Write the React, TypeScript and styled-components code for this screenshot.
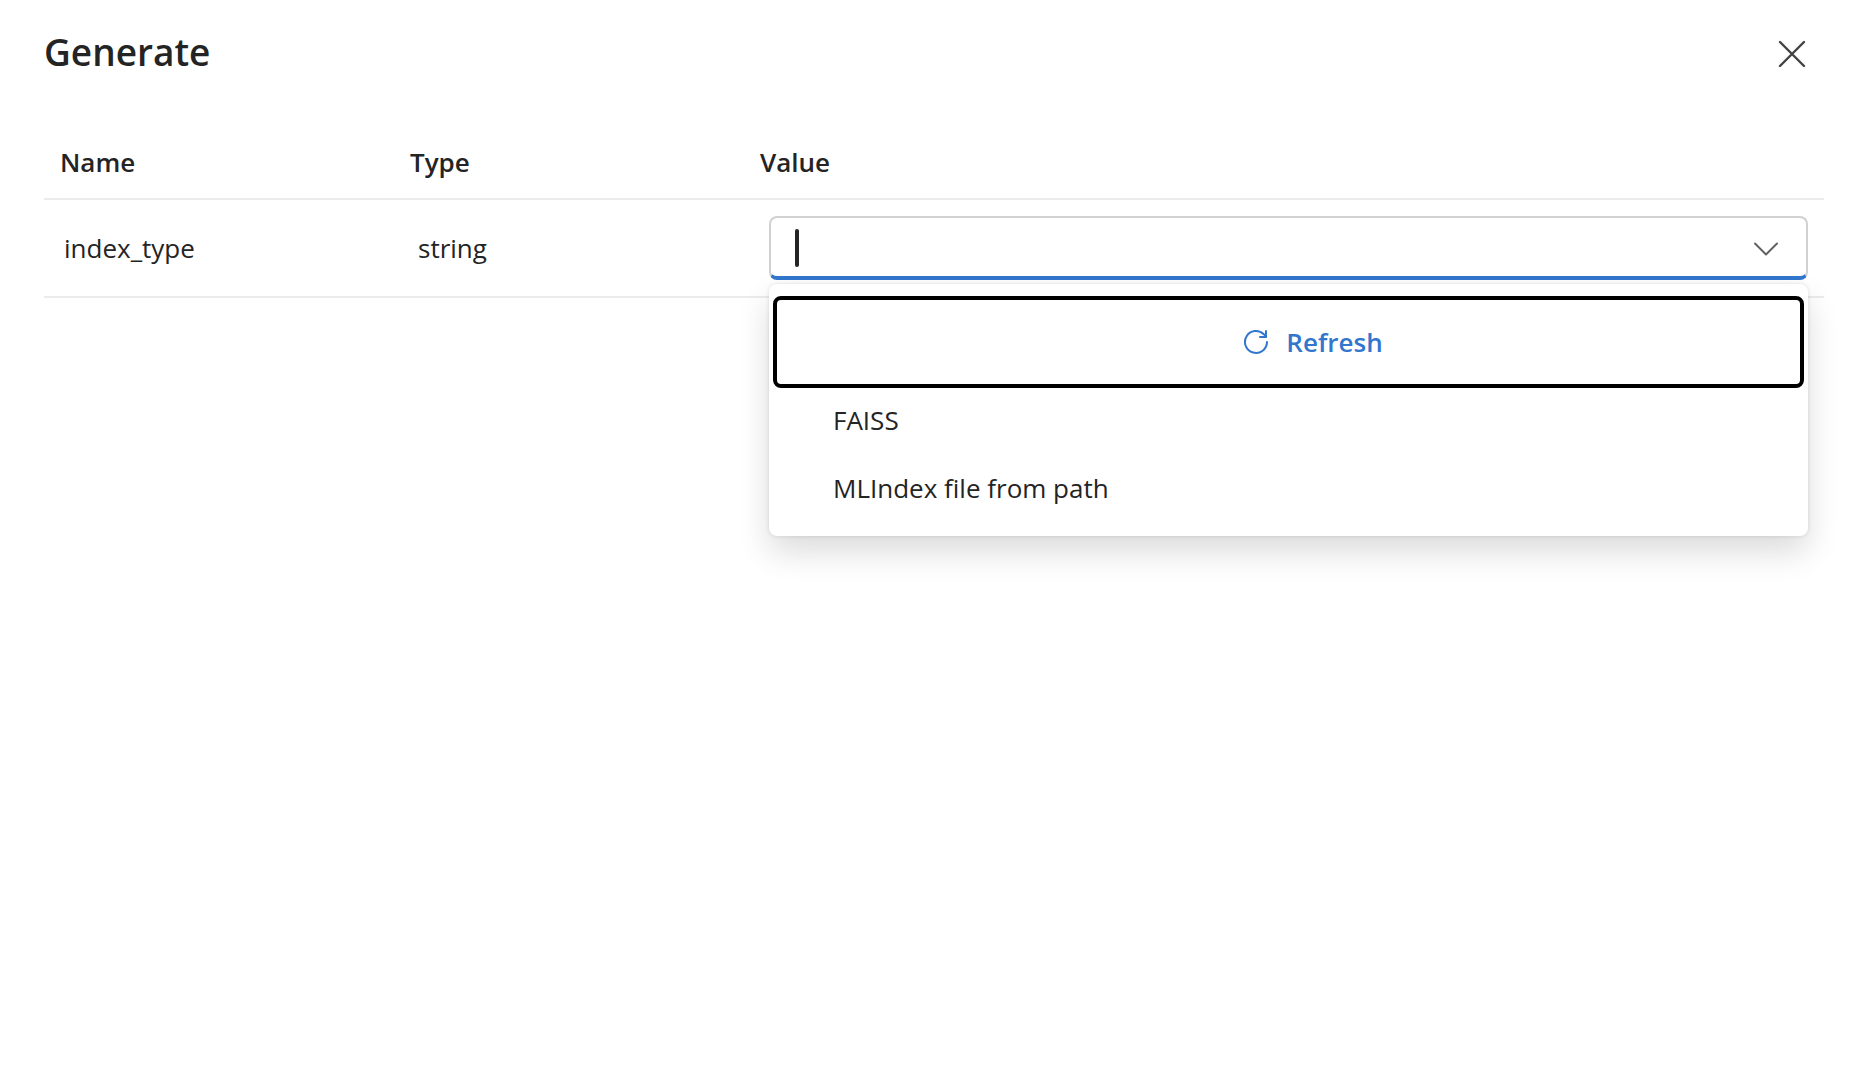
import React, { useState } from "react";
import styled, { createGlobalStyle } from "styled-components";

const ink = "#242424";
const brand = "#3276cd";

const GlobalStyle = createGlobalStyle`
  *, *::before, *::after { box-sizing: border-box; }
  body {
    margin: 0;
    background: #fff;
    color: ${ink};
    font-family: "Segoe UI", "Open Sans", "Noto Sans", sans-serif;
    font-size: 26px;
    line-height: 40px;
  }
  button, input { font: inherit; color: inherit; }
`;

const Panel = styled.main`
  min-height: 100vh;
  padding: 26px 26px 24px 44px;
`;

const PanelHeader = styled.header`
  display: flex;
  align-items: center;
  justify-content: space-between;
  margin-bottom: 48px;
`;

const Title = styled.h1`
  margin: 0;
  font-size: 37px;
  line-height: 52px;
  font-weight: 600;
`;

const IconButton = styled.button`
  display: grid;
  place-items: center;
  width: 64px;
  height: 52px;
  padding: 4px 0 0;
  border: 0;
  background: transparent;
  color: #424242;
  cursor: pointer;
`;

const Table = styled.table`
  width: 100%;
  table-layout: fixed;
  border-collapse: separate;
  border-spacing: 0;
`;

const Column = styled.col<{ $width?: string }>`
  width: ${({ $width }) => $width ?? "auto"};
`;

const HeadCell = styled.th`
  padding: 16px;
  border-bottom: 2px solid #ebebeb;
  font-weight: 600;
  text-align: left;
`;

const Cell = styled.td<{ $indent: number }>`
  padding: 16px 16px 16px ${({ $indent }) => $indent}px;
  border-bottom: 2px solid #ebebeb;
`;

const Combobox = styled.div`
  position: relative;
`;

const Field = styled.div`
  position: relative;
  display: flex;
  height: 64px;
  overflow: hidden;
  border: 2px solid #d1d1d1;
  border-radius: 8px;
  border-bottom: 4px solid ${brand};
`;

const Input = styled.input`
  flex: 1;
  min-width: 0;
  padding: 0 24px;
  border: 0;
  outline: 0;
  background: transparent;
  caret-color: transparent;
`;

const Caret = styled.span`
  position: absolute;
  top: 11px;
  left: 24px;
  width: 4px;
  height: 38px;
  border-radius: 2px;
  background: ${ink};
`;

const ToggleButton = styled(IconButton)`
  width: 80px;
  height: auto;
  color: #616161;
`;

const Popup = styled.div`
  position: absolute;
  top: calc(100% + 4px);
  left: 0;
  right: 0;
  z-index: 1;
  padding: 12px 4px 16px;
  border-radius: 8px;
  background: #fff;
  box-shadow: 0 0 4px rgba(0, 0, 0, 0.12), 0 16px 32px rgba(0, 0, 0, 0.14);
`;

const RefreshButton = styled.button`
  display: flex;
  align-items: center;
  justify-content: center;
  gap: 16px;
  width: 100%;
  height: 92px;
  padding: 0 0 0 48px;
  border: 4px solid #000;
  border-radius: 8px;
  background: transparent;
  color: ${brand};
  font-weight: 600;
  cursor: pointer;
`;

const OptionList = styled.ul`
  display: grid;
  gap: 4px;
  margin: 0;
  padding: 0;
  list-style: none;
`;

const Option = styled.li`
  padding: 12px 16px 12px 60px;
  cursor: pointer;
`;

const CloseIcon = () => (
  <svg width="28" height="28" viewBox="0 0 28 28" fill="none" stroke="currentColor" strokeWidth="2.4" strokeLinecap="round" aria-hidden="true">
    <path d="M2 2 26 26M26 2 2 26" />
  </svg>
);

const ChevronIcon = () => (
  <svg width="28" height="16" viewBox="0 0 28 16" fill="none" stroke="currentColor" strokeWidth="2" strokeLinecap="round" strokeLinejoin="round" aria-hidden="true">
    <path d="M3 2.5 14 13.5 25 2.5" />
  </svg>
);

const RefreshIcon = () => (
  <svg width="28" height="28" viewBox="0 0 28 28" fill="none" stroke="currentColor" strokeWidth="2" strokeLinecap="round" strokeLinejoin="round" aria-hidden="true">
    <path d="M25 14A11 11 0 1 1 21.8 6.2L24 8.8" />
    <path d="M24 3V9H18" />
  </svg>
);

const options = ["FAISS", "MLIndex file from path"];

export default function App() {
  const [value, setValue] = useState("");
  const [open, setOpen] = useState(true);

  const choose = (option: string) => {
    setValue(option);
    setOpen(false);
  };

  return (
    <>
      <GlobalStyle />
      <Panel>
        <PanelHeader>
          <Title>Generate</Title>
          <IconButton type="button" aria-label="Close">
            <CloseIcon />
          </IconButton>
        </PanelHeader>
        <Table>
          <colgroup>
            <Column $width="350px" />
            <Column $width="350px" />
            <Column />
          </colgroup>
          <thead>
            <tr>
              <HeadCell scope="col">Name</HeadCell>
              <HeadCell scope="col">Type</HeadCell>
              <HeadCell scope="col">Value</HeadCell>
            </tr>
          </thead>
          <tbody>
            <tr>
              <Cell $indent={20} id="index-type-name">index_type</Cell>
              <Cell $indent={24}>string</Cell>
              <Cell $indent={25}>
                <Combobox>
                  <Field>
                    <Input
                      type="text"
                      role="combobox"
                      aria-labelledby="index-type-name"
                      aria-expanded={open}
                      aria-controls="index-type-options"
                      value={value}
                      onChange={(event) => setValue(event.target.value)}
                    />
                    {value === "" && <Caret />}
                    <ToggleButton type="button" aria-label="Toggle options" onClick={() => setOpen(!open)}>
                      <ChevronIcon />
                    </ToggleButton>
                  </Field>
                  {open && (
                    <Popup>
                      <RefreshButton type="button">
                        <RefreshIcon />
                        Refresh
                      </RefreshButton>
                      <OptionList id="index-type-options" role="listbox" aria-labelledby="index-type-name">
                        {options.map((option) => (
                          <Option key={option} role="option" aria-selected={value === option} onClick={() => choose(option)}>
                            {option}
                          </Option>
                        ))}
                      </OptionList>
                    </Popup>
                  )}
                </Combobox>
              </Cell>
            </tr>
          </tbody>
        </Table>
      </Panel>
    </>
  );
}
